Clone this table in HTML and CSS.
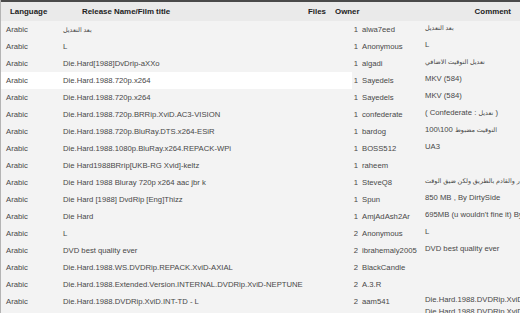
FILE: index.html
```html
<!DOCTYPE html>
<html lang="en">
<head>
    <meta charset="UTF-8">
    <meta name="viewport" content="width=device-width, initial-scale=1.0">
    <title>Subtitles</title>
    <link rel="stylesheet" href="styles.css">
</head>
<body>

<div class="subs-table">
    <!-- Header -->
    <div class="subs-head">
        <div class="head-lang">Language</div>
        <div class="head-name">Release Name/Film title</div>
        <div class="head-files">Files</div>
        <div class="head-owner">Owner</div>
        <div class="head-comment">Comment</div>
    </div>

    <!-- Rows -->
    <div class="subs-row">
        <div class="lang">Arabic</div>
        <div class="name"><span class="ar">بعد التعديل</span></div>
        <div class="files">1</div>
        <div class="owner">alwa7eed</div>
        <div class="comment"><span class="ar">بعد التعديل</span></div>
    </div>
    <div class="subs-row">
        <div class="lang">Arabic</div>
        <div class="name">L</div>
        <div class="files">1</div>
        <div class="owner">Anonymous</div>
        <div class="comment">L</div>
    </div>
    <div class="subs-row">
        <div class="lang">Arabic</div>
        <div class="name">Die.Hard[1988]DvDrip-aXXo</div>
        <div class="files">1</div>
        <div class="owner">algadi</div>
        <div class="comment"><span class="ar">تعديل التوقيت الاضافي</span></div>
    </div>
    <div class="subs-row hover">
        <div class="lang">Arabic</div>
        <div class="name">Die.Hard.1988.720p.x264</div>
        <div class="files">1</div>
        <div class="owner">Sayedels</div>
        <div class="comment">MKV (584)</div>
    </div>
    <div class="subs-row">
        <div class="lang">Arabic</div>
        <div class="name">Die.Hard.1988.720p.x264</div>
        <div class="files">1</div>
        <div class="owner">Sayedels</div>
        <div class="comment">MKV (584)</div>
    </div>
    <div class="subs-row">
        <div class="lang">Arabic</div>
        <div class="name">Die.Hard.1988.720p.BRRip.XviD.AC3-VISION</div>
        <div class="files">1</div>
        <div class="owner">confederate</div>
        <div class="comment">( Confederate : <span class="ar">تعديل</span> )</div>
    </div>
    <div class="subs-row">
        <div class="lang">Arabic</div>
        <div class="name">Die.Hard.1988.720p.BluRay.DTS.x264-ESiR</div>
        <div class="files">1</div>
        <div class="owner">bardog</div>
        <div class="comment"><span class="ar">التوقيت مضبوط</span> 100\100</div>
    </div>
    <div class="subs-row">
        <div class="lang">Arabic</div>
        <div class="name">Die.Hard.1988.1080p.BluRay.x264.REPACK-WPi</div>
        <div class="files">1</div>
        <div class="owner">BOSS512</div>
        <div class="comment">UA3</div>
    </div>
    <div class="subs-row">
        <div class="lang">Arabic</div>
        <div class="name">Die Hard1988BRrip[UKB-RG Xvid]-keltz</div>
        <div class="files">1</div>
        <div class="owner">raheem</div>
        <div class="comment"></div>
    </div>
    <div class="subs-row">
        <div class="lang">Arabic</div>
        <div class="name">Die Hard 1988 Bluray 720p x264 aac jbr k</div>
        <div class="files">1</div>
        <div class="owner">SteveQ8</div>
        <div class="comment"><span class="ar">در والقادم بالطريق ولكن ضيق الوقت!</span></div>
    </div>
    <div class="subs-row">
        <div class="lang">Arabic</div>
        <div class="name">Die Hard [1988] DvdRip [Eng]Thizz</div>
        <div class="files">1</div>
        <div class="owner">Spun</div>
        <div class="comment">850 MB , By DirtySide</div>
    </div>
    <div class="subs-row">
        <div class="lang">Arabic</div>
        <div class="name">Die Hard</div>
        <div class="files">1</div>
        <div class="owner">AmjAdAsh2Ar</div>
        <div class="comment">695MB (u wouldn't fine it) By DirtySide</div>
    </div>
    <div class="subs-row">
        <div class="lang">Arabic</div>
        <div class="name">L</div>
        <div class="files">2</div>
        <div class="owner">Anonymous</div>
        <div class="comment">L</div>
    </div>
    <div class="subs-row">
        <div class="lang">Arabic</div>
        <div class="name">DVD best quality ever</div>
        <div class="files">2</div>
        <div class="owner">ibrahemaly2005</div>
        <div class="comment">DVD best quality ever</div>
    </div>
    <div class="subs-row">
        <div class="lang">Arabic</div>
        <div class="name">Die.Hard.1988.WS.DVDRip.REPACK.XviD-AXIAL</div>
        <div class="files">2</div>
        <div class="owner">BlackCandle</div>
        <div class="comment"></div>
    </div>
    <div class="subs-row">
        <div class="lang">Arabic</div>
        <div class="name">Die.Hard.1988.Extended.Version.INTERNAL.DVDRip.XviD-NEPTUNE</div>
        <div class="files">2</div>
        <div class="owner">A.3.R</div>
        <div class="comment"></div>
    </div>
    <div class="subs-row">
        <div class="lang">Arabic</div>
        <div class="name">Die.Hard.1988.DVDRip.XviD.INT-TD - L</div>
        <div class="files">2</div>
        <div class="owner">aam541</div>
        <div class="comment">Die.Hard.1988.DVDRip.XviD.INT-TD<br>Die.Hard.1988.DVDRip.XviD.INT-TD</div>
    </div>
</div>

</body>
</html>
```

FILE: styles.css
```css
/* General Reset */
* {
    margin: 0;
    padding: 0;
    box-sizing: border-box;
}

body {
    font-family: 'Liberation Sans', 'DejaVu Sans', sans-serif;
    background: #f3f3f3;
    color: #484848;
    overflow: hidden;
}

.subs-table {
    width: 620px;
    border-left: 1px solid #b4b4b4;
    font-size: 7.7px;
}

/* Header */
.subs-head {
    display: grid;
    grid-template-columns: 81px 226px 27px 131px 45px;
    height: 21px;
    padding-top: 1px;
    line-height: 18px;
    border-top: 2px solid #4a4a4a;
    background: #eaeaea;
    color: #222;
    font-weight: bold;
    font-size: 7.9px;
}

.head-lang {
    padding-left: 9px;
}

.head-comment {
    text-align: right;
    white-space: nowrap;
}

/* Rows */
.subs-row {
    display: grid;
    grid-template-columns: 57px 294px 6px 64px 199px;
    align-items: start;
    line-height: 9px;
    white-space: nowrap;
}

.subs-row > div {
    padding: 4px 0;
    overflow: hidden;
}

.subs-row .lang {
    padding-left: 5px;
}

.subs-row .name {
    padding-left: 5px;
}

.subs-row .files {
    text-align: right;
}

.subs-row .owner {
    padding-left: 4px;
}

.subs-row .comment {
    padding: 1px 0 0 3px;
    line-height: 12px;
}

.subs-row.hover .lang,
.subs-row.hover .name {
    background: #fff;
}

.ar {
    font-size: 6.4px;
}
```
